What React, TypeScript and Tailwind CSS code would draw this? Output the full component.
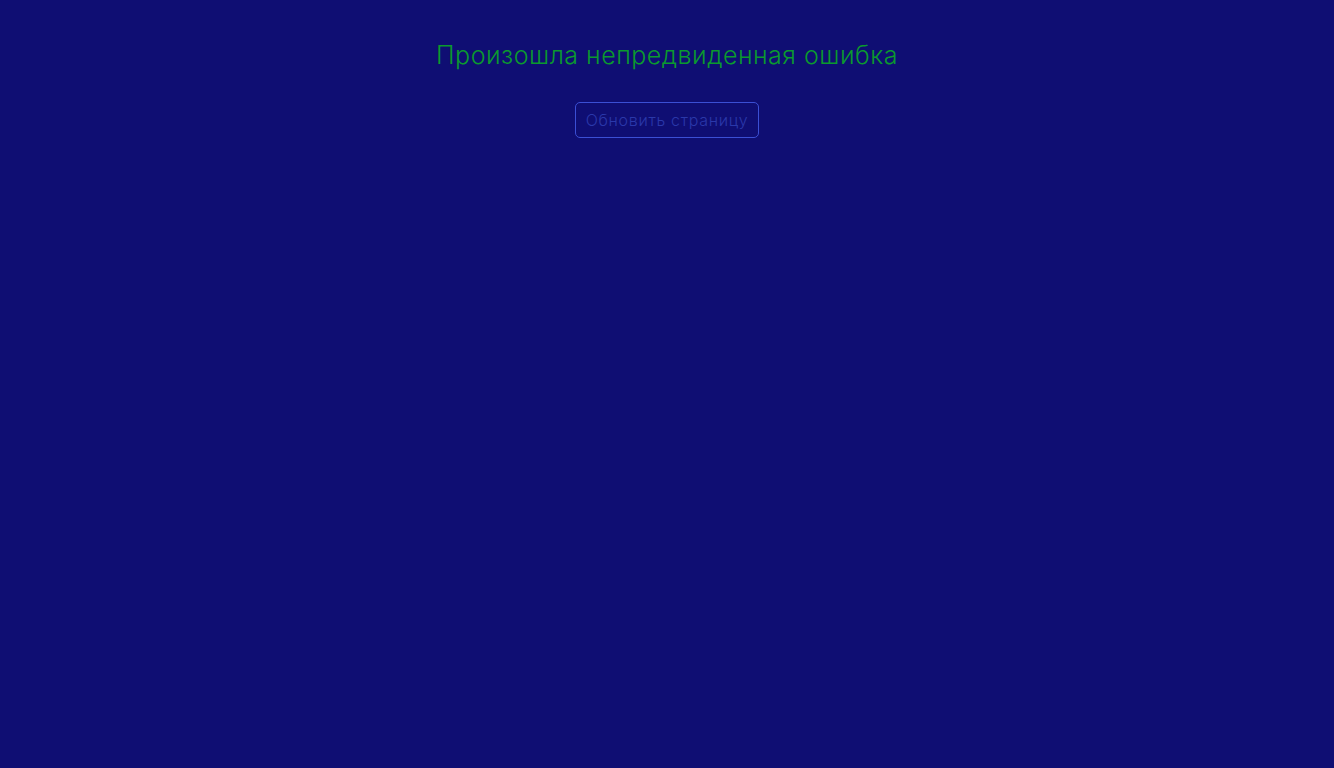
export default function App() {
  return (
    <div
      className="min-h-screen w-full bg-[#0f0e73] flex flex-col items-center"
      style={{ fontFamily: "Inter, 'Open Sans', sans-serif" }}
    >
      <h1 className="mt-[39px] text-[25px] leading-[32px] font-light tracking-[0.5px] text-[#0b9a2e]">
        Произошла непредвиденная ошибка
      </h1>
      <button className="mt-[31px] h-[36px] px-[10px] rounded-[5px] border border-[#3b4fd4] text-[16px] font-light tracking-[0.7px] text-[#2a38aa]">
        Обновить страницу
      </button>
    </div>
  );
}
